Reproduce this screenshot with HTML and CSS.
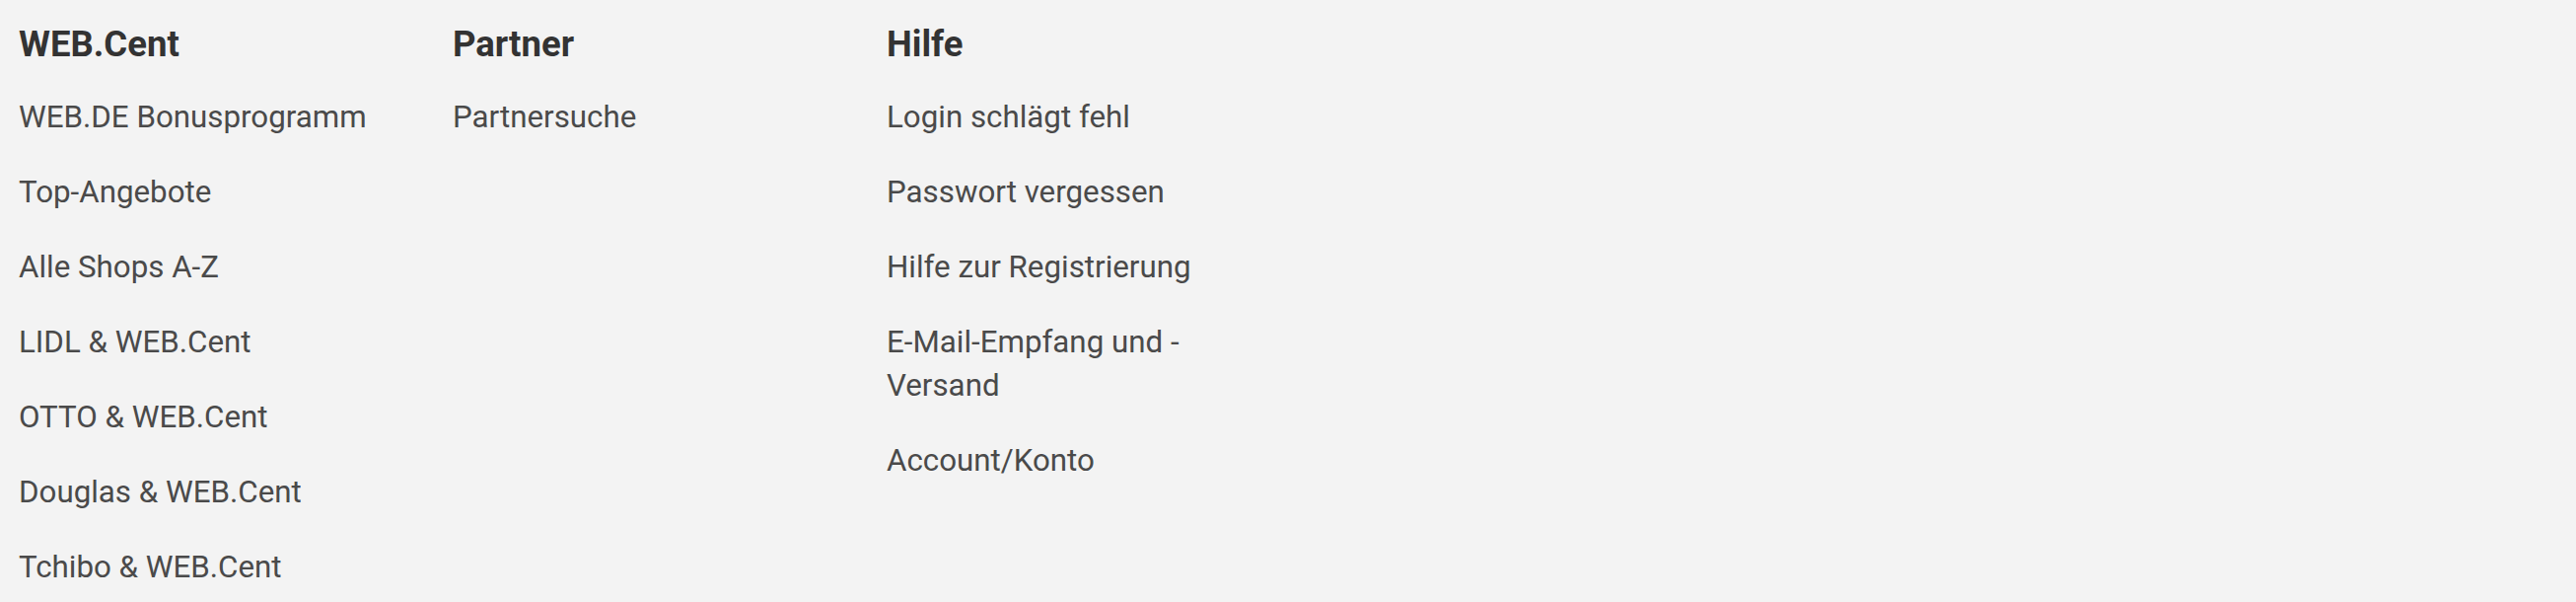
FILE: index.html
```html
<!DOCTYPE html>
<html lang="de">
<head>
<meta charset="utf-8">
<title>Footer</title>
<link rel="stylesheet" href="styles.css">
</head>
<body>
<footer class="footer">
  <nav class="footer-col">
    <h3 class="footer-title">WEB.Cent</h3>
    <ul class="footer-list">
      <li><a href="#">WEB.DE Bonusprogramm</a></li>
      <li><a href="#">Top-Angebote</a></li>
      <li><a href="#">Alle Shops A-Z</a></li>
      <li><a href="#">LIDL &amp; WEB.Cent</a></li>
      <li><a href="#">OTTO &amp; WEB.Cent</a></li>
      <li><a href="#">Douglas &amp; WEB.Cent</a></li>
      <li><a href="#">Tchibo &amp; WEB.Cent</a></li>
    </ul>
  </nav>
  <nav class="footer-col">
    <h3 class="footer-title">Partner</h3>
    <ul class="footer-list">
      <li><a href="#">Partnersuche</a></li>
    </ul>
  </nav>
  <nav class="footer-col">
    <h3 class="footer-title">Hilfe</h3>
    <ul class="footer-list">
      <li><a href="#">Login schlägt fehl</a></li>
      <li><a href="#">Passwort vergessen</a></li>
      <li><a href="#">Hilfe zur Registrierung</a></li>
      <li><a href="#">E-Mail-Empfang und -Versand</a></li>
      <li><a href="#">Account/Konto</a></li>
    </ul>
  </nav>
</footer>
</body>
</html>
```
FILE: styles.css
```css
html, body {
  margin: 0;
  padding: 0;
  background: #f3f3f3;
}
body {
  font-family: Roboto, "Noto Sans", sans-serif;
  height: 610px;
  overflow: hidden;
}
.footer {
  display: grid;
  grid-template-columns: repeat(3, 400px);
  column-gap: 40px;
  padding: 23px 0 0 19px;
}
.footer-col {
  display: flex;
  flex-direction: column;
  gap: 30px;
}
.footer-title {
  margin: 0;
  font-size: 36.5px;
  line-height: 44px;
  font-weight: 700;
  color: #333333;
}
.footer-list {
  list-style: none;
  margin: 0;
  padding: 0;
  display: flex;
  flex-direction: column;
  gap: 32px;
}
.footer-list a {
  display: block;
  font-size: 31.3px;
  line-height: 44px;
  color: #4a4a4a;
  text-decoration: none;
}
```
